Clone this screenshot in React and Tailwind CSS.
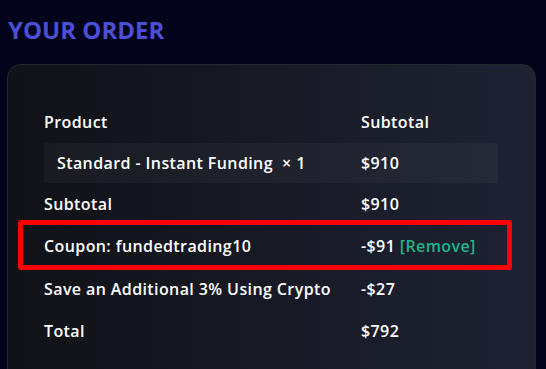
import React from 'react';

const rows = [
  { label: 'Subtotal', value: '$910' },
];

const App = () => {
  return (
    <div
      className="w-[546px] h-[369px] overflow-hidden bg-[#03031b] text-white"
      style={{ fontFamily: '"Open Sans", "Noto Sans", sans-serif' }}
    >
      {/* Heading */}
      <div className="pl-2 pt-[14px] h-[64px]">
        <h2 className="text-[24px] leading-[32px] font-bold text-[#4a4fd6] tracking-[0px]">YOUR ORDER</h2>
      </div>

      {/* Card */}
      <div className="ml-[7px] w-[529px] h-[320px] rounded-[14px] border border-[#262830] bg-gradient-to-r from-[#111217] to-[#1e2233] pt-[36px] pl-[36px] pr-[37px]">
        <div className="text-[16px] font-semibold tracking-[0.4px]">
          {/* Header */}
          <div className="flex h-[42px] items-center">
            <div className="w-[317px]">Product</div>
            <div>Subtotal</div>
          </div>

          {/* Product line */}
          <div className="flex h-[40px] items-center bg-white/[0.035]">
            <div className="w-[317px] pl-[13px]">
              Standard - Instant Funding&nbsp;&nbsp;<span>× 1</span>
            </div>
            <div>$910</div>
          </div>

          {rows.map((r) => (
            <div key={r.label} className="flex h-[42px] items-center">
              <div className="w-[317px]">{r.label}</div>
              <div>{r.value}</div>
            </div>
          ))}

          {/* Coupon row with highlight */}
          <div className="relative flex h-[42px] items-center">
            <div className="w-[317px]">Coupon: fundedtrading10</div>
            <div>
              -$91 <span className="text-[#1fb58a]">[Remove]</span>
            </div>
            <div className="absolute left-[-26px] right-[-14px] top-[-5px] bottom-[-3px] border-[5px] border-[#ff0000] rounded-[3px] pointer-events-none" />
          </div>

          <div className="flex h-[43px] items-center">
            <div className="w-[317px]">Save an Additional 3% Using Crypto</div>
            <div>-$27</div>
          </div>

          <div className="flex h-[42px] items-center">
            <div className="w-[317px]">Total</div>
            <div>$792</div>
          </div>
        </div>
      </div>
    </div>
  );
};

export default App;
